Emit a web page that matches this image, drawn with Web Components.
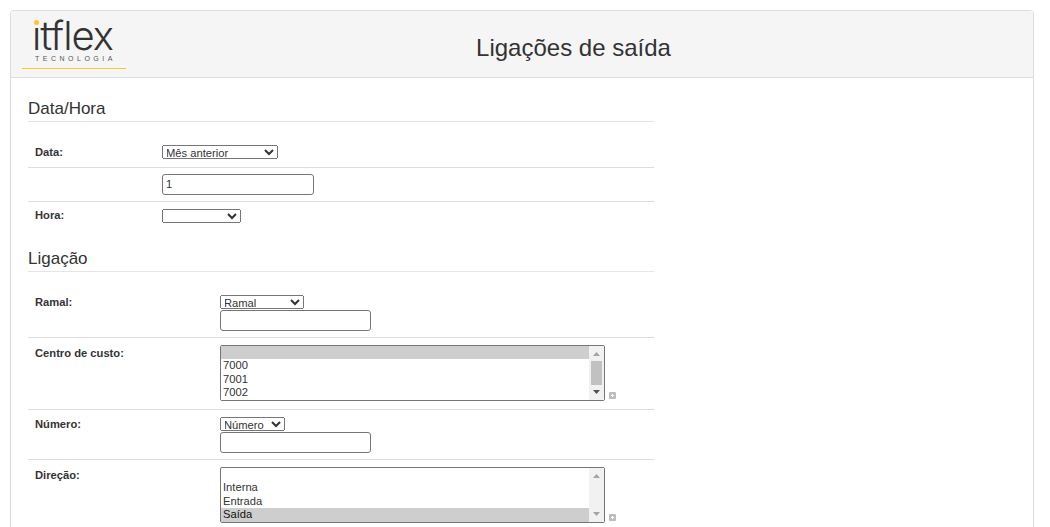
<!DOCTYPE html>
<html lang="pt-BR">
<head>
<meta charset="utf-8">
<title>Ligações de saída</title>
<style>
  html, body { height: 100%; overflow: hidden; }
  body {
    margin: 0;
    background: #fff;
    color: #333;
    font-family: "Liberation Sans", Arial, sans-serif;
    font-size: 11.2px;
  }
</style>
</head>
<body>
<report-panel>
  <itflex-logo slot="logo"></itflex-logo>
  <span slot="title">Ligações de saída</span>

  <form-section heading="Data/Hora" columns="134px">
    <form-row label="Data:" style="--top:8px;--bottom:8px;--label-top:1px">
      <form-select width="116" options="Mês anterior"></form-select>
    </form-row>
    <form-row style="--top:6px;--bottom:6px;--input-gap:0px">
      <form-input width="152" value="1"></form-input>
    </form-row>
    <form-row label="Hora:" last style="--top:7px;--bottom:7px;--label-top:0px">
      <form-select width="79" options=""></form-select>
    </form-row>
  </form-section>

  <form-section heading="Ligação" columns="192px">
    <form-row label="Ramal:" style="--top:8px;--bottom:6px;--label-top:1px">
      <form-select width="84" options="Ramal"></form-select>
      <form-input width="151"></form-input>
    </form-row>
    <form-row label="Centro de custo:" style="--top:7px;--bottom:8px;--label-top:2px">
      <form-list options=",7000,7001,7002,7003" selected="0" scrollable></form-list>
    </form-row>
    <form-row label="Número:" style="--top:7px;--bottom:6px;--label-top:1px">
      <form-select width="65" options="Número"></form-select>
      <form-input width="151"></form-input>
    </form-row>
    <form-row label="Direção:" last style="--top:7px;--bottom:8px;--label-top:2px">
      <form-list options=",Interna,Entrada,Saída" selected="3"></form-list>
    </form-row>
  </form-section>
</report-panel>

<script>
class ReportPanel extends HTMLElement {
  constructor() {
    super();
    this.shadowDOM = this.attachShadow({ mode: "open" });
  }

  connectedCallback() {
    this.shadowDOM.innerHTML = `
      <style>
        :host {
          display: block;
          margin: 10px 16px 0 10px;
          border: 1px solid #ddd;
          border-radius: 4px;
          background: #fff;
          box-shadow: 0 1px 1px rgba(0, 0, 0, .05);
        }
        .head {
          display: flex;
          align-items: flex-start;
          height: 66px;
          padding: 0 12px 0 11px;
          background: #f5f5f5;
          border-bottom: 1px solid #ddd;
          border-radius: 3px 3px 0 0;
        }
        .title {
          flex: 1;
          padding-top: 23px;
          text-align: center;
          font-size: 24px;
          line-height: 27px;
          color: #333;
        }
        .body {
          padding: 21px 17px 40px;
        }
      </style>
      <div class="head">
        <slot name="logo"></slot>
        <div class="title"><slot name="title"></slot></div>
      </div>
      <div class="body"><slot></slot></div>`;
  }
}

class ItflexLogo extends HTMLElement {
  constructor() {
    super();
    this.shadowDOM = this.attachShadow({ mode: "open" });
  }

  connectedCallback() {
    this.shadowDOM.innerHTML = `
      <style>
        :host {
          display: block;
          width: 104px;
          height: 57px;
          border-bottom: 1px solid #fcc72e;
        }
        svg { display: block; overflow: visible; }
        text {
          font-family: Inter, "Liberation Sans", sans-serif;
          font-size: 40px;
          font-weight: 350;
          letter-spacing: -1px;
          fill: #333;
        }
        .sub {
          display: block;
          padding-left: 13px;
          font-size: 7px;
          line-height: 8px;
          letter-spacing: 3.5px;
          color: #555;
        }
      </style>
      <svg width="104" height="44" viewBox="0 0 104 44">
        <text x="10" y="39">itflex</text>
        <rect x="10" y="7" width="9" height="9" fill="#f5f5f5"/>
        <circle cx="14.5" cy="11.5" r="2.5" fill="#fcc72e"/>
      </svg>
      <span class="sub">TECNOLOGIA</span>`;
  }
}

class FormSection extends HTMLElement {
  constructor() {
    super();
    this.shadowDOM = this.attachShadow({ mode: "open" });
  }

  connectedCallback() {
    this.style.setProperty("--label-col", this.getAttribute("columns"));
    this.shadowDOM.innerHTML = `
      <style>
        :host {
          display: block;
          width: 626px;
          margin-bottom: 19px;
        }
        h2 {
          margin: 0 0 15px;
          padding-bottom: 3px;
          border-bottom: 1px solid #e5e5e5;
          font-size: 17px;
          font-weight: 400;
          line-height: 19px;
          color: #333;
        }
      </style>
      <h2>${this.getAttribute("heading")}</h2>
      <slot></slot>`;
  }
}

class FormRow extends HTMLElement {
  constructor() {
    super();
    this.shadowDOM = this.attachShadow({ mode: "open" });
  }

  connectedCallback() {
    this.shadowDOM.innerHTML = `
      <style>
        :host {
          display: grid;
          grid-template-columns: var(--label-col) 1fr;
          padding: var(--top, 7px) 0 var(--bottom, 7px);
          border-bottom: 1px solid #ddd;
        }
        :host([last]) { border-bottom: 0; }
        .label {
          padding: var(--label-top, 0) 0 0 7px;
          font-size: 11.2px;
          font-weight: 700;
          line-height: 13px;
          color: #333;
        }
        .value {
          display: flex;
          flex-direction: column;
          align-items: flex-start;
        }
      </style>
      <div class="label">${this.getAttribute("label") || ""}</div>
      <div class="value"><slot></slot></div>`;
  }
}

class FormSelect extends HTMLElement {
  constructor() {
    super();
    this.shadowDOM = this.attachShadow({ mode: "open" });
  }

  connectedCallback() {
    const opts = this.getAttribute("options").split(",");
    this.shadowDOM.innerHTML = `
      <style>
        :host { display: block; }
        select {
          display: block;
          box-sizing: border-box;
          width: ${this.getAttribute("width")}px;
          height: 14px;
          margin: 0;
          padding: 0 0 1px;
          text-indent: -1px;
          font-family: "Liberation Sans", Arial, sans-serif;
          font-size: 11.2px;
          line-height: 10px;
          color: #333;
        }
      </style>
      <select>${opts.map((o) => `<option>${o}</option>`).join("")}</select>`;
  }
}

class FormInput extends HTMLElement {
  constructor() {
    super();
    this.shadowDOM = this.attachShadow({ mode: "open" });
  }

  connectedCallback() {
    const value = this.getAttribute("value") || "";
    this.shadowDOM.innerHTML = `
      <style>
        :host { display: block; margin-top: var(--input-gap, 1px); }
        input {
          display: block;
          box-sizing: border-box;
          width: ${this.getAttribute("width")}px;
          height: 21px;
          margin: 0;
          padding: 0 3px 2px;
          border: 1px solid #767676;
          border-radius: 3px;
          font-family: "Liberation Sans", Arial, sans-serif;
          font-size: 11.2px;
          color: #333;
        }
      </style>
      <input type="text" value="${value}">`;
  }
}

class FormList extends HTMLElement {
  constructor() {
    super();
    this.shadowDOM = this.attachShadow({ mode: "open" });
  }

  connectedCallback() {
    const opts = this.getAttribute("options").split(",");
    const sel = Number(this.getAttribute("selected"));
    const scrollable = this.hasAttribute("scrollable");
    this.shadowDOM.innerHTML = `
      <style>
        :host {
          display: flex;
          align-items: flex-end;
          gap: 4px;
        }
        .box { position: relative; width: 385px; height: 56px; }
        select {
          display: block;
          box-sizing: border-box;
          width: 385px;
          height: 56px;
          margin: 0;
          border: 1px solid #767676;
          border-radius: 2px;
          font-family: "Liberation Sans", Arial, sans-serif;
          font-size: 11.2px;
          color: #333;
        }
        option {
          min-height: 13.44px;
          padding: 0 2px;
          line-height: 13.44px;
        }
        .bar { position: absolute; top: 1px; right: 1px; display: block; }
        .more { display: block; margin-bottom: 2px; }
      </style>
      <div class="box">
        <select multiple size="4">
          ${opts.map((o, i) => `<option${i === sel ? " selected" : ""}>${o}</option>`).join("")}
        </select>
        <svg class="bar" width="15" height="54" viewBox="0 0 15 54">
          <rect width="15" height="54" fill="#f1f1f1"/>
          <path d="M4 10h7L7.5 6z" fill="#a3a3a3"/>
          ${scrollable ? `<rect x="2" y="15" width="11" height="24" fill="#c1c1c1"/>` : ""}
          <path d="M4 44h7L7.5 48z" fill="${scrollable ? "#505050" : "#a3a3a3"}"/>
        </svg>
      </div>
      <svg class="more" width="7" height="7" viewBox="0 0 7 7">
        <rect width="7" height="7" rx="1" fill="#bdbdbd"/>
        <path d="M3.5 2v3M2 3.5h3" stroke="#fff" stroke-width="1"/>
      </svg>`;
  }
}

customElements.define("report-panel", ReportPanel);
customElements.define("itflex-logo", ItflexLogo);
customElements.define("form-section", FormSection);
customElements.define("form-row", FormRow);
customElements.define("form-select", FormSelect);
customElements.define("form-input", FormInput);
customElements.define("form-list", FormList);
</script>
</body>
</html>
